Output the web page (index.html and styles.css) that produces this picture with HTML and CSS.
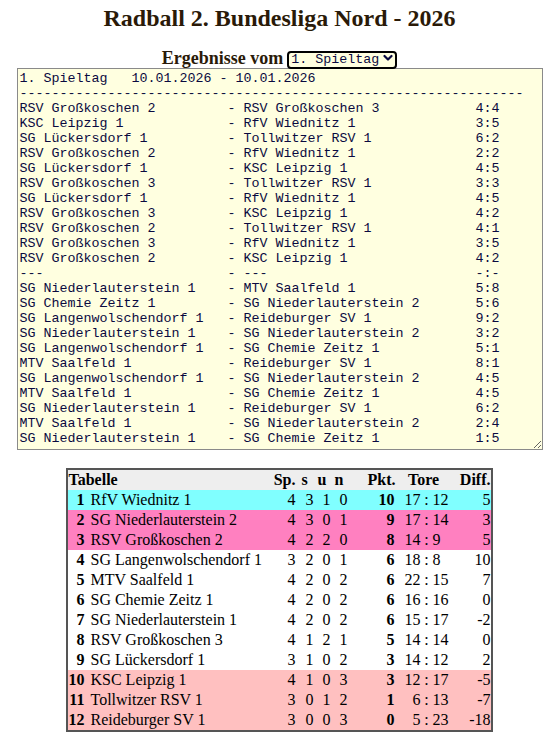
FILE: index.html
```html
<!DOCTYPE html>
<html lang="de">
<head>
<meta charset="utf-8">
<title>Radball 2. Bundesliga Nord - 2026</title>
<link rel="stylesheet" href="styles.css">
</head>
<body>
<h1 class="title">Radball 2. Bundesliga Nord - 2026</h1>
<form class="picker">
  <label class="picker-label" for="spieltag">Ergebnisse vom</label>
  <span class="select-wrap">
    <select id="spieltag" class="select">
      <option>1. Spieltag</option>
      <option>2. Spieltag</option>
      <option>3. Spieltag</option>
      <option>4. Spieltag</option>
      <option>5. Spieltag</option>
    </select>
    <svg class="chevron" width="10" height="8" viewBox="0 0 10 8" aria-hidden="true"><path d="M1.5 2 L5 5.5 L8.5 2" fill="none" stroke="#0a0a40" stroke-width="2.2" stroke-linecap="round" stroke-linejoin="round"/></svg>
  </span>
</form>
<textarea class="results" rows="25" wrap="off" readonly>1. Spieltag   10.01.2026 - 10.01.2026
---------------------------------------------------------------
RSV Großkoschen 2         - RSV Großkoschen 3            4:4
KSC Leipzig 1             - RfV Wiednitz 1               3:5
SG Lückersdorf 1          - Tollwitzer RSV 1             6:2
RSV Großkoschen 2         - RfV Wiednitz 1               2:2
SG Lückersdorf 1          - KSC Leipzig 1                4:5
RSV Großkoschen 3         - Tollwitzer RSV 1             3:3
SG Lückersdorf 1          - RfV Wiednitz 1               4:5
RSV Großkoschen 3         - KSC Leipzig 1                4:2
RSV Großkoschen 2         - Tollwitzer RSV 1             4:1
RSV Großkoschen 3         - RfV Wiednitz 1               3:5
RSV Großkoschen 2         - KSC Leipzig 1                4:2
---                       - ---                          -:-
SG Niederlauterstein 1    - MTV Saalfeld 1               5:8
SG Chemie Zeitz 1         - SG Niederlauterstein 2       5:6
SG Langenwolschendorf 1   - Reideburger SV 1             9:2
SG Niederlauterstein 1    - SG Niederlauterstein 2       3:2
SG Langenwolschendorf 1   - SG Chemie Zeitz 1            5:1
MTV Saalfeld 1            - Reideburger SV 1             8:1
SG Langenwolschendorf 1   - SG Niederlauterstein 2       4:5
MTV Saalfeld 1            - SG Chemie Zeitz 1            4:5
SG Niederlauterstein 1    - Reideburger SV 1             6:2
MTV Saalfeld 1            - SG Niederlauterstein 2       2:4
SG Niederlauterstein 1    - SG Chemie Zeitz 1            1:5</textarea>
<table class="standings">
  <colgroup>
    <col class="c-rank"><col class="c-team"><col class="c-sp"><col class="c-s"><col class="c-u"><col class="c-n"><col class="c-pkt"><col class="c-gf"><col class="c-colon"><col class="c-ga"><col class="c-diff">
  </colgroup>
  <thead>
    <tr class="head">
      <th colspan="2" class="h-left">Tabelle</th>
      <th class="num">Sp.</th>
      <th class="ctr">s</th>
      <th class="ctr">u</th>
      <th class="ctr">n</th>
      <th class="num">Pkt.</th>
      <th colspan="3" class="ctr">Tore</th>
      <th class="num">Diff.</th>
    </tr>
  </thead>
  <tbody>
    <tr class="up"><td class="rank">1</td><td class="team">RfV Wiednitz 1</td><td class="num">4</td><td class="num">3</td><td class="num">1</td><td class="num">0</td><td class="pts">10</td><td class="num">17</td><td class="colon">:</td><td class="ga">12</td><td class="num">5</td></tr>
    <tr class="qual"><td class="rank">2</td><td class="team">SG Niederlauterstein 2</td><td class="num">4</td><td class="num">3</td><td class="num">0</td><td class="num">1</td><td class="pts">9</td><td class="num">17</td><td class="colon">:</td><td class="ga">14</td><td class="num">3</td></tr>
    <tr class="qual"><td class="rank">3</td><td class="team">RSV Großkoschen 2</td><td class="num">4</td><td class="num">2</td><td class="num">2</td><td class="num">0</td><td class="pts">8</td><td class="num">14</td><td class="colon">:</td><td class="ga">9</td><td class="num">5</td></tr>
    <tr><td class="rank">4</td><td class="team">SG Langenwolschendorf 1</td><td class="num">3</td><td class="num">2</td><td class="num">0</td><td class="num">1</td><td class="pts">6</td><td class="num">18</td><td class="colon">:</td><td class="ga">8</td><td class="num">10</td></tr>
    <tr><td class="rank">5</td><td class="team">MTV Saalfeld 1</td><td class="num">4</td><td class="num">2</td><td class="num">0</td><td class="num">2</td><td class="pts">6</td><td class="num">22</td><td class="colon">:</td><td class="ga">15</td><td class="num">7</td></tr>
    <tr><td class="rank">6</td><td class="team">SG Chemie Zeitz 1</td><td class="num">4</td><td class="num">2</td><td class="num">0</td><td class="num">2</td><td class="pts">6</td><td class="num">16</td><td class="colon">:</td><td class="ga">16</td><td class="num">0</td></tr>
    <tr><td class="rank">7</td><td class="team">SG Niederlauterstein 1</td><td class="num">4</td><td class="num">2</td><td class="num">0</td><td class="num">2</td><td class="pts">6</td><td class="num">15</td><td class="colon">:</td><td class="ga">17</td><td class="num">-2</td></tr>
    <tr><td class="rank">8</td><td class="team">RSV Großkoschen 3</td><td class="num">4</td><td class="num">1</td><td class="num">2</td><td class="num">1</td><td class="pts">5</td><td class="num">14</td><td class="colon">:</td><td class="ga">14</td><td class="num">0</td></tr>
    <tr><td class="rank">9</td><td class="team">SG Lückersdorf 1</td><td class="num">3</td><td class="num">1</td><td class="num">0</td><td class="num">2</td><td class="pts">3</td><td class="num">14</td><td class="colon">:</td><td class="ga">12</td><td class="num">2</td></tr>
    <tr class="down"><td class="rank">10</td><td class="team">KSC Leipzig 1</td><td class="num">4</td><td class="num">1</td><td class="num">0</td><td class="num">3</td><td class="pts">3</td><td class="num">12</td><td class="colon">:</td><td class="ga">17</td><td class="num">-5</td></tr>
    <tr class="down"><td class="rank">11</td><td class="team">Tollwitzer RSV 1</td><td class="num">3</td><td class="num">0</td><td class="num">1</td><td class="num">2</td><td class="pts">1</td><td class="num">6</td><td class="colon">:</td><td class="ga">13</td><td class="num">-7</td></tr>
    <tr class="down"><td class="rank">12</td><td class="team">Reideburger SV 1</td><td class="num">3</td><td class="num">0</td><td class="num">0</td><td class="num">3</td><td class="pts">0</td><td class="num">5</td><td class="colon">:</td><td class="ga">23</td><td class="num">-18</td></tr>
  </tbody>
</table>
</body>
</html>
```

FILE: styles.css
```css
html, body {
  background: #ffffff;
}
body {
  margin: 0;
  padding: 4px 0 0;
  font-family: "Liberation Serif", "Times New Roman", serif;
  color: #000;
}
.title {
  margin: 0;
  font-size: 24px;
  line-height: 28px;
  font-weight: bold;
  text-align: center;
  color: #2a1a08;
}
.picker {
  margin: 16px 0 0;
  display: flex;
  justify-content: center;
  align-items: flex-end;
  gap: 4px;
  height: 20px;
}
.picker-label {
  font-size: 18px;
  font-weight: bold;
  line-height: 20px;
  color: #2a1a08;
}
.select-wrap {
  position: relative;
  display: inline-block;
  height: 18px;
  margin-bottom: 1px;
}
.select {
  appearance: none;
  -webkit-appearance: none;
  box-sizing: border-box;
  width: 110px;
  height: 18px;
  margin: 0;
  padding: 0 16px 0 2px;
  border: 2px solid #000;
  border-radius: 4px;
  background: #ffffe0;
  color: #0a0a40;
  font-family: "Liberation Mono", "Courier New", monospace;
  font-size: 13.33px;
  line-height: 14px;
  outline: none;
}
.chevron {
  position: absolute;
  right: 4px;
  top: 5px;
  pointer-events: none;
}
.results {
  display: block;
  box-sizing: border-box;
  width: 526px;
  height: 382px;
  margin: 0 auto;
  padding: 2px;
  border: 1px solid #8a8a8a;
  border-radius: 0;
  background: #ffffe0;
  color: #0a0a40;
  font-family: "Liberation Mono", "Courier New", monospace;
  font-size: 13.33px;
  line-height: 15px;
  white-space: pre;
  overflow: hidden;
  outline: none;
}
.standings {
  margin: 18px auto 0;
  border: 2px solid #555;
  border-collapse: separate;
  border-spacing: 0;
  table-layout: fixed;
  width: 426px;
  font-size: 16px;
  line-height: 20px;
}
.standings th, .standings td {
  padding: 0;
  white-space: nowrap;
}
.c-rank { width: 19px; }
.c-team { width: 184px; }
.c-sp { width: 24px; }
.c-s { width: 18px; }
.c-u { width: 17px; }
.c-n { width: 17px; }
.c-pkt { width: 48px; }
.c-gf { width: 25px; }
.c-colon { width: 12px; }
.c-ga { width: 19px; }
.c-diff { width: 39px; }
.head th {
  background: #eeeeee;
  font-weight: bold;
}
.h-left {
  text-align: left;
  padding-left: 1px;
}
.num {
  text-align: right;
}
.ctr {
  text-align: center;
}
.rank {
  text-align: right;
  font-weight: bold;
  padding-right: 3px !important;
}
.team {
  padding-left: 3px !important;
}
.pts {
  text-align: right;
  font-weight: bold;
  padding-right: 1px !important;
}
.colon {
  text-align: center;
}
.ga {
  text-align: left;
}
.up td { background: #80ffff; }
.qual td { background: #ff80c0; }
.down td { background: #ffc0c0; }
```
